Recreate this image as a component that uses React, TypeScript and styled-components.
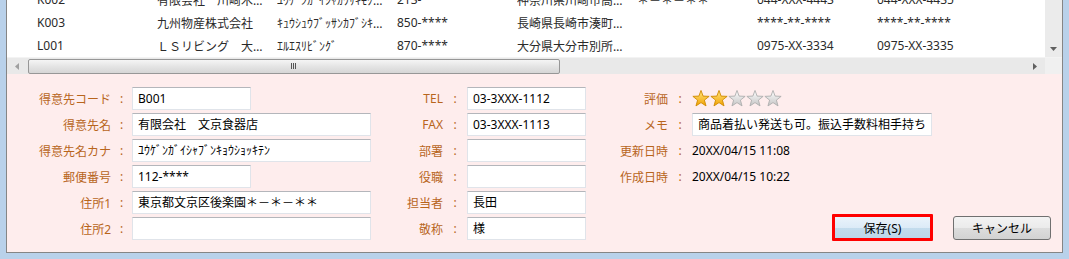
import styled, { createGlobalStyle } from 'styled-components'

const GlobalStyle = createGlobalStyle`
  html, body {
    margin: 0;
    padding: 0;
    background: #b9d1ea;
  }
  body {
    font-family: "Noto Sans", "Noto Sans CJK JP", sans-serif;
    font-size: 12px;
    color: #222;
  }
`

const Page = styled.div`
  height: 259px;
  padding-left: 6px;
  overflow: hidden;
`

const Window = styled.div`
  box-sizing: border-box;
  width: 1057px;
  height: 253px;
  border: 1px solid #858585;
  border-top: none;
  display: grid;
  grid-template-rows: 57px 17px 1fr;
  background: #fff;
`

const GridBody = styled.div`
  display: flex;
  overflow: hidden;
`

const RowsViewport = styled.div`
  flex: 1;
  overflow: hidden;
`

// the list is scrolled a little, so the first row is half hidden
const RowsInner = styled.div`
  margin-top: -12px;
`

const Row = styled.div`
  display: flex;
  height: 23px;
  align-items: center;
  padding-left: 30px;
`

const Cell = styled.div`
  width: 120px;
  flex: none;
  white-space: nowrap;
  overflow: hidden;
  color: #2a2a2a;
`

const VScroll = styled.div`
  width: 17px;
  background: #ebebeb;
  display: flex;
  flex-direction: column;
  justify-content: flex-end;
`

const ArrowBox = styled.div<{ $w?: number }>`
  width: ${p => p.$w ?? 17}px;
  height: 17px;
  flex: none;
  display: flex;
  align-items: center;
  justify-content: center;
`

const HScroll = styled.div`
  display: flex;
  align-items: center;
  background: #e9e9e9;
  border-top: 1px solid #f3f3f3;
  box-sizing: border-box;
`

const Track = styled.div`
  flex: 1;
  height: 17px;
  display: flex;
  align-items: center;
  padding-left: 1px;
`

const Thumb = styled.div`
  box-sizing: border-box;
  width: 532px;
  height: 15px;
  border: 1px solid #979797;
  border-radius: 2px;
  background: linear-gradient(#f5f5f5, #e4e4e4 50%, #d6d6d6);
  display: flex;
  align-items: center;
  justify-content: center;
`

const Grip = styled.div`
  width: 6px;
  height: 6px;
  background: repeating-linear-gradient(90deg, #555 0 1px, transparent 1px 2px);
  margin-left: -1px;
`

const Corner = styled.div`
  width: 17px;
  height: 17px;
  background: #f0f0f0;
`

const Form = styled.div`
  background: #feeded;
  display: grid;
  grid-template-columns: 373px 220px 1fr;
  padding: 13px 0 11px;
  box-sizing: border-box;
`

const Column = styled.div`
  display: flex;
  flex-direction: column;
  gap: 3px;
`

const Field = styled.div<{ $label: number; $colon?: number }>`
  display: grid;
  grid-template-columns: ${p => p.$label}px ${p => p.$colon ?? 24}px auto;
  height: 23px;
  align-items: center;
`

const Label = styled.div`
  text-align: right;
  color: #b8651c;
  white-space: nowrap;
`

const Colon = styled.div`
  text-align: center;
  color: #b8651c;
`

const Input = styled.div<{ $w: number }>`
  box-sizing: border-box;
  width: ${p => p.$w}px;
  height: 23px;
  background: #fff;
  border: 1px solid #e0e4ea;
  border-top-color: #b4b6bb;
  padding: 0 5px;
  line-height: 21px;
  color: #000;
  white-space: nowrap;
  overflow: hidden;
`

const Value = styled.div`
  color: #000;
`

const Stars = styled.div`
  display: flex;
  align-items: center;
`

const ButtonBar = styled.div`
  margin-top: auto;
  display: flex;
  justify-content: flex-end;
  align-items: center;
  gap: 20px;
  padding-right: 11px;
`

const Button = styled.button<{ $primary?: boolean }>`
  box-sizing: border-box;
  width: ${p => (p.$primary ? 101 : 98)}px;
  height: ${p => (p.$primary ? 27 : 24)}px;
  border: ${p => (p.$primary ? '3px solid #ff0000' : '1px solid #707070')};
  border-radius: ${p => (p.$primary ? 1 : 3)}px;
  background: ${p =>
    p.$primary
      ? 'linear-gradient(#eaf3fb, #dcebf7 50%, #c3dced 51%, #bcd7ea)'
      : 'linear-gradient(#f3f3f3, #ebebeb 50%, #dddddd 51%, #d2d2d2)'};
  font-family: inherit;
  font-size: 12px;
  color: #000;
  padding: 0;
`

const STAR = '10,0.5 12.35,6.76 19.03,7.06 13.8,11.24 15.58,17.69 10,14 4.42,17.69 6.2,11.24 0.97,7.06 7.65,6.76'

function Star({ on, id }: { on: boolean; id: string }) {
  return (
    <svg width="18" height="18" viewBox="0 0 20 20">
      <defs>
        <linearGradient id={id} x1="0" y1="0" x2="0" y2="1">
          <stop offset="0" stopColor={on ? '#ffe680' : '#ffffff'} />
          <stop offset="1" stopColor={on ? '#f2a200' : '#c4c4c4'} />
        </linearGradient>
      </defs>
      <polygon points={STAR} fill={`url(#${id})`} stroke={on ? '#cf8a00' : '#aeaeae'} strokeWidth="1" strokeLinejoin="round" />
    </svg>
  )
}

const rows = [
  ['K002', '有限会社\u3000川崎木…', 'ﾕｳｹﾞﾝｶﾞｲｼｬｶﾜｻｷﾓｸ…', '213-****', '神奈川県川崎市高…', '＊－＊－＊＊', '044-XXX-4443', '044-XXX-4435'],
  ['K003', '九州物産株式会社', 'ｷｭｳｼｭｳﾌﾞｯｻﾝｶﾌﾞｼｷ…', '850-****', '長崎県長崎市湊町…', '', '****-**-****', '****-**-****'],
  ['L001', 'ＬＳリビング\u3000大…', 'ｴﾙｴｽﾘﾋﾞﾝｸﾞ', '870-****', '大分県大分市別所…', '', '0975-XX-3334', '0975-XX-3335'],
]

const left: [string, string, number][] = [
  ['得意先コード', 'B001', 119],
  ['得意先名', '有限会社\u3000文京食器店', 239],
  ['得意先名カナ', 'ﾕｳｹﾞﾝｶﾞｲｼｬﾌﾞﾝｷｮｳｼｮｯｷﾃﾝ', 239],
  ['郵便番号', '112-****', 119],
  ['住所1', '東京都文京区後楽園＊－＊－＊＊', 239],
  ['住所2', '', 239],
]

const middle: [string, string][] = [
  ['TEL', '03-3XXX-1112'],
  ['FAX', '03-3XXX-1113'],
  ['部署', ''],
  ['役職', ''],
  ['担当者', '長田'],
  ['敬称', '様'],
]

export default function App() {
  return (
    <Page>
      <GlobalStyle />
      <Window>
        <GridBody>
          <RowsViewport>
            <RowsInner>
              {rows.map(r => (
                <Row key={r[0]}>
                  {r.map((c, i) => (
                    <Cell key={i}>{c}</Cell>
                  ))}
                </Row>
              ))}
            </RowsInner>
          </RowsViewport>
          <VScroll>
            <ArrowBox>
              <svg width="7" height="4" viewBox="0 0 7 4"><polygon points="0,0 7,0 3.5,4" fill="#606060" /></svg>
            </ArrowBox>
          </VScroll>
        </GridBody>
        <HScroll>
          <ArrowBox $w={20}>
            <svg width="4" height="7" viewBox="0 0 4 7"><polygon points="4,0 4,7 0,3.5" fill="#a0a0a0" /></svg>
          </ArrowBox>
          <Track>
            <Thumb><Grip /></Thumb>
          </Track>
          <ArrowBox $w={20}>
            <svg width="4" height="7" viewBox="0 0 4 7"><polygon points="0,0 0,7 4,3.5" fill="#606060" /></svg>
          </ArrowBox>
          <Corner />
        </HScroll>
        <Form>
          <Column>
            {left.map(([l, v, w]) => (
              <Field key={l} $label={104} $colon={21}>
                <Label>{l}</Label>
                <Colon>:</Colon>
                <Input $w={w}>{v}</Input>
              </Field>
            ))}
          </Column>
          <Column>
            {middle.map(([l, v]) => (
              <Field key={l} $label={63}>
                <Label>{l}</Label>
                <Colon>:</Colon>
                <Input $w={119}>{v}</Input>
              </Field>
            ))}
          </Column>
          <Column>
            <Field $label={68}>
              <Label>評価</Label>
              <Colon>:</Colon>
              <Stars>
                {[0, 1, 2, 3, 4].map(i => (
                  <Star key={i} id={`star${i}`} on={i < 2} />
                ))}
              </Stars>
            </Field>
            <Field $label={68}>
              <Label>メモ</Label>
              <Colon>:</Colon>
              <Input $w={240}>商品着払い発送も可。振込手数料相手持ち</Input>
            </Field>
            <Field $label={68}>
              <Label>更新日時</Label>
              <Colon>:</Colon>
              <Value>20XX/04/15 11:08</Value>
            </Field>
            <Field $label={68}>
              <Label>作成日時</Label>
              <Colon>:</Colon>
              <Value>20XX/04/15 10:22</Value>
            </Field>
            <ButtonBar>
              <Button $primary>保存(S)</Button>
              <Button>キャンセル</Button>
            </ButtonBar>
          </Column>
        </Form>
      </Window>
    </Page>
  )
}
